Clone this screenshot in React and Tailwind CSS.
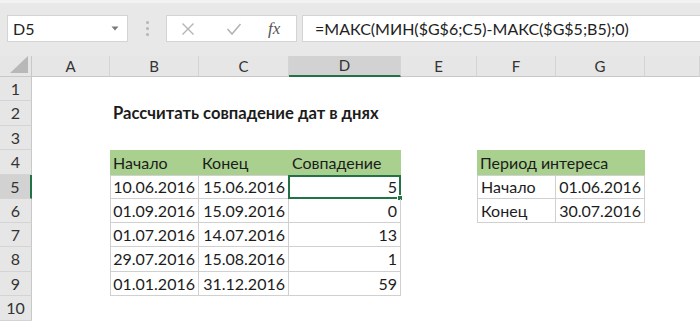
const font = { fontFamily: '"Lato", "Open Sans", "Noto Sans", sans-serif' }

const rowHeights = ['h-[24px]', 'h-[25px]', 'h-[24px]', 'h-[25px]', 'h-[24px]', 'h-[24px]', 'h-[24px]', 'h-[25px]', 'h-[24px]', 'h-[25px]']
const letters = ['A', 'B', 'C', 'D', 'E', 'F', 'G', '']

const dates = [
  ['10.06.2016', '15.06.2016', '5'],
  ['01.09.2016', '15.09.2016', '0'],
  ['01.07.2016', '14.07.2016', '13'],
  ['29.07.2016', '15.08.2016', '1'],
  ['01.01.2016', '31.12.2016', '59'],
]

const green = 'bg-[#a9d08e]'
const boxed = 'border-b border-r border-[#d0d0d0]'
const right = 'justify-end'

// returns [text, extra classes] for a sheet cell
const cellFor = (row, col) => {
  if (row === 2 && col === 1)
    return [<span className="font-bold text-[16.6px]">Рассчитать совпадение дат в днях</span>, 'whitespace-nowrap overflow-visible z-10']
  if (row === 4) {
    if (col === 1) return ['Начало', green]
    if (col === 2) return ['Конец', green]
    if (col === 3) return ['Совпадение', green]
    if (col === 5) return ['Период интереса', `${green} whitespace-nowrap overflow-visible z-10`]
    if (col === 6) return ['', green]
  }
  const top = row === 5 ? 'border-t' : ''
  if (row >= 5 && row <= 9) {
    const d = dates[row - 5]
    if (col === 1) return [d[0], `${boxed} border-l ${right} ${top}`]
    if (col === 2) return [d[1], `${boxed} ${right} ${top}`]
    if (col === 3) return [d[2], `${boxed} ${right} ${top}`]
  }
  if (row === 5 || row === 6) {
    if (col === 5) return [row === 5 ? 'Начало' : 'Конец', `${boxed} border-l ${top}`]
    if (col === 6) return [row === 5 ? '01.06.2016' : '30.07.2016', `${boxed} ${right} ${top}`]
  }
  return ['', '']
}

const Toolbar = () => (
  <div className="h-[56px] bg-[#e8e8e8] border-t-[3px] border-[#f2f2f2] flex items-start pt-[12px]">
    <div className="ml-[7px] w-[121px] h-[27px] bg-white border border-[#d4d4d4] flex items-center justify-between pl-[5px] pr-[8px] text-[16px] text-[#222]">
      <span>D5</span>
      <svg width="8" height="5" viewBox="0 0 8 5"><path d="M0.5 0.5 L4 4.5 L7.5 0.5 Z" fill="#7a7a7a" /></svg>
    </div>
    <div className="w-[38px] h-[27px] flex flex-col items-center justify-center gap-[3px]">
      <span className="w-[3px] h-[3px] rounded-full bg-[#b5b5b5]" />
      <span className="w-[3px] h-[3px] rounded-full bg-[#b5b5b5]" />
      <span className="w-[3px] h-[3px] rounded-full bg-[#b5b5b5]" />
    </div>
    <div className="w-[131px] h-[27px] bg-white border border-[#d4d4d4] flex items-center">
      <svg className="ml-[14px]" width="14" height="14" viewBox="0 0 14 14">
        <path d="M1.5 1.5 L12.5 12.5 M12.5 1.5 L1.5 12.5" stroke="#b4b4b4" strokeWidth="1.4" fill="none" />
      </svg>
      <svg className="ml-[31px]" width="16" height="14" viewBox="0 0 16 14">
        <path d="M1.5 7 L6 12 L14.5 2" stroke="#b4b4b4" strokeWidth="1.6" fill="none" />
      </svg>
      <span className="ml-[26px] italic text-[17px] text-[#555]" style={{ fontFamily: '"Liberation Serif", serif' }}>fx</span>
    </div>
    <div className="ml-[5px] flex-1 h-[27px] bg-white border-y border-l border-[#d4d4d4] flex items-center pl-[12px] text-[16px] text-[#222] whitespace-nowrap">
      =МАКС(МИН($G$6;C5)-МАКС($G$5;B5);0)
    </div>
  </div>
)

export default function App() {
  return (
    <div className="w-[700px] h-[321px] overflow-hidden bg-white text-[#1c1c1c]" style={font}>
      <Toolbar />
      <div className="grid grid-cols-[32px_78px_89px_90px_112px_76px_79px_89px_1fr]">
        {/* column headers */}
        <div className="h-[21px] bg-[#e6e6e6] border-r border-b border-[#c8c8c8] relative">
          <svg className="absolute right-[3px] bottom-[3px]" width="18" height="17" viewBox="0 0 18 17">
            <path d="M18 0 L18 17 L0 17 Z" fill="#b8b8b8" />
          </svg>
        </div>
        {letters.map((l, i) => (
          <div
            key={i}
            className={`h-[21px] flex items-center justify-center text-[15px] text-[#333] border-r border-[#d4d4d4] ${
              l === 'D' ? 'bg-[#d2d2d2] border-b-2 border-b-[#217346]' : 'bg-[#e6e6e6] border-b border-b-[#c8c8c8]'
            }`}
          >
            {l}
          </div>
        ))}

        {rowHeights.map((h, r) => {
          const row = r + 1
          return [
            <div
              key={`n${row}`}
              className={`${h} flex items-center justify-center text-[16px] text-[#333] border-b border-[#d4d4d4] ${
                row === 5 ? 'bg-[#d2d2d2] border-r-2 border-r-[#217346]' : 'bg-[#e6e6e6] border-r border-r-[#c8c8c8]'
              }`}
            >
              {row}
            </div>,
            ...letters.map((_, c) => {
              const [text, cls] = cellFor(row, c)
              const selected = row === 5 && c === 3
              return (
                <div key={`${row}-${c}`} className={`${h} relative flex items-center px-[3px] text-[16px] ${cls}`}>
                  {text}
                  {selected && (
                    <>
                      <div className="absolute -left-[1px] -top-[1px] -right-[1px] -bottom-[1px] border-2 border-[#217346]" />
                      <div className="absolute -right-[3px] -bottom-[3px] w-[6px] h-[6px] bg-[#217346] border border-white" />
                    </>
                  )}
                </div>
              )
            }),
          ]
        })}
      </div>
    </div>
  )
}
